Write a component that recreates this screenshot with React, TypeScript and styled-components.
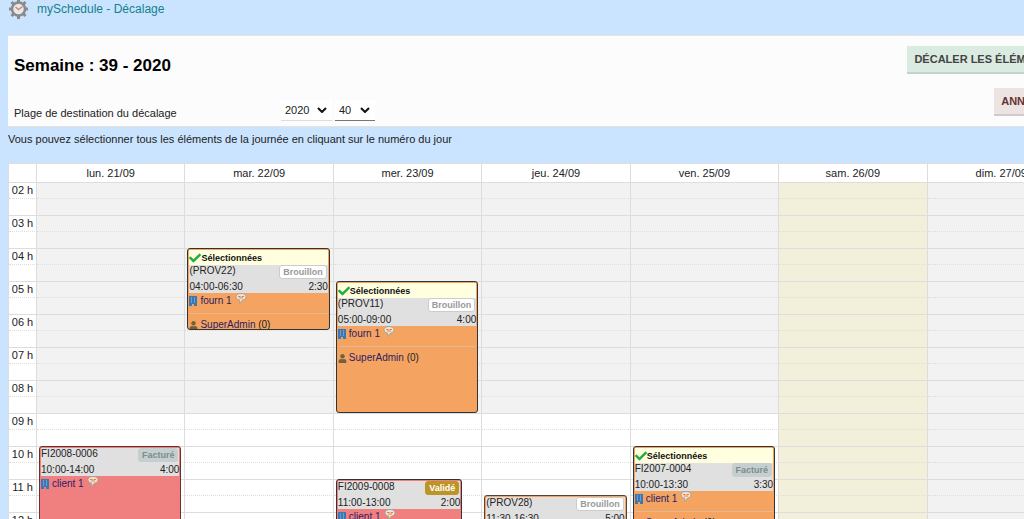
import React from "react";
import styled, { createGlobalStyle, css } from "styled-components";
import { FaCheck, FaUser } from "react-icons/fa";

const Global = createGlobalStyle`
  * { box-sizing: border-box; }
  body {
    margin: 0;
    background: #cae4ff;
    color: #222;
    font-family: "Liberation Sans", Arial, sans-serif;
    font-size: 11px;
  }
`;

const Page = styled.div`
  height: 100vh;
  overflow: hidden;
`;

const Content = styled.main`
  min-width: 1084px;
  padding: 0 8px;
`;

const TitleBar = styled.header`
  display: flex;
  align-items: center;
  gap: 8px;
  height: 18px;
  margin-bottom: 17px;
`;

const PageTitle = styled.h1`
  margin: 0;
  font-size: 12px;
  font-weight: normal;
  line-height: 16px;
  color: #14808f;
`;

const Panel = styled.section`
  display: flex;
  justify-content: space-between;
  height: 92px;
  padding: 0 14px 0 6px;
  background: #fcfcfc;
  border: solid #e6e2e0;
  border-width: 1px 0;
`;

const Settings = styled.div`
  display: flex;
  flex-direction: column;
  justify-content: space-between;
  padding: 20px 0 4px;
`;

const WeekTitle = styled.h2`
  margin: 0;
  font-size: 17px;
  line-height: 20px;
  color: #000;
`;

const RangeRow = styled.div`
  display: flex;
  align-items: flex-end;
  gap: 3px;
`;

const RangeLabel = styled.label`
  width: 264px;
  padding-bottom: 2px;
  line-height: 14px;
`;

const SelectBox = styled.span<{ $strong?: boolean }>`
  position: relative;
  display: flex;
  align-items: center;
  margin-bottom: 1px;
  background: #fff;
  border-bottom: 1px solid ${(p) => (p.$strong ? "#777" : "#ddd")};

  svg {
    position: absolute;
    right: 5px;
    pointer-events: none;
  }
`;

const Select = styled.select<{ $wide?: boolean }>`
  appearance: none;
  width: ${(p) => (p.$wide ? 51 : 40)}px;
  height: 20px;
  padding: 0 4px;
  border: 0;
  background: transparent;
  color: #222;
  font: inherit;
`;

const Actions = styled.div`
  display: flex;
  flex-direction: column;
  align-items: flex-end;
  gap: 14px;
  padding-top: 10px;
`;

const ActionButton = styled.button<{ $danger?: boolean }>`
  height: 28px;
  padding: 0 7px;
  border: 0;
  border-bottom: 2px solid ${(p) => (p.$danger ? "#d3c9c9" : "#c3d3ca")};
  background: ${(p) => (p.$danger ? "#ebe4e2" : "#daebe1")};
  color: ${(p) => (p.$danger ? "#633" : "#444")};
  font: bold 11px "Liberation Sans", Arial, sans-serif;
  text-transform: uppercase;
  white-space: nowrap;
`;

const Hint = styled.p`
  margin: 5px 0 17px;
  line-height: 14px;
`;

const Calendar = styled.table`
  width: 100%;
  table-layout: fixed;
  border-spacing: 0;
  border-left: 1px solid #ddd;
  background: #fff;
`;

const AxisCol = styled.col`
  width: 28px;
`;

const DayHeader = styled.th`
  height: 20px;
  padding: 0;
  border: solid #ddd;
  border-width: 1px 1px 1px 0;
  font-weight: normal;
  line-height: 16px;
`;

const slotLine = css<{ $half: boolean }>`
  height: ${(p) => (p.$half ? 17 : 16)}px;
  padding: 0;
  border-right: 1px solid #ddd;
  border-bottom: 1px ${(p) => (p.$half ? "solid" : "dotted")} #ddd;
`;

const HourCell = styled.th<{ $half: boolean }>`
  ${slotLine}
  font-weight: normal;
  line-height: 15px;
  white-space: nowrap;
`;

const Slot = styled.td<{ $half: boolean; $closed: boolean; $today: boolean }>`
  ${slotLine}
  position: relative;
  background: ${(p) => (p.$today ? "#f2efdb" : p.$closed ? "#f2f2f2" : "#fff")};
`;

const EventCard = styled.article<{ $tone: "orange" | "red"; $edge: string; $narrow?: boolean }>`
  position: absolute;
  z-index: 1;
  top: -1px;
  left: 2px;
  right: ${(p) => (p.$narrow ? 19 : 3)}px;
  overflow: hidden;
  border: 1px solid ${(p) => p.$edge};
  border-radius: 3px;
  background: ${(p) => (p.$tone === "orange" ? "#f4a460" : "#f08080")};
  padding: 1px;
  font-size: 10px;
  line-height: 14px;
`;

const SelectedBar = styled.div`
  display: flex;
  align-items: center;
  height: 15px;
  background: #ffffe0;
  color: #111;
  font-size: 9px;
  font-weight: bold;
`;

const EventHead = styled.div`
  height: 28px;
  background: #e0e0e0;
`;

const HeadLine = styled.div`
  display: flex;
  justify-content: space-between;
  height: 14px;
  line-height: 12px;

  & + & {
    line-height: 16px;
  }
`;

type Status = "Brouillon" | "Facturé" | "Validé";

const badgeColors: Record<Status, string> = {
  Brouillon: "background: #fff; border-color: #ccc; color: #999;",
  Facturé: "background: #c6cfd0; border-color: #c6cfd0; color: #7b8c8c;",
  Validé: "background: #bc9526; border-color: #bc9526; color: #fff;",
};

const Badge = styled.span<{ $status: Status }>`
  height: 14px;
  margin: 0 1px;
  padding: 0 3px;
  border: 1px solid;
  border-radius: 3px;
  font-size: 9px;
  font-weight: bold;
  line-height: 12px;
  ${(p) => badgeColors[p.$status]}
`;

const Party = styled.div`
  display: flex;
  align-items: center;
  gap: 3px;
  height: 20px;
  padding-bottom: 5px;

  svg:last-child {
    align-self: flex-start;
  }
`;

const Assignee = styled.div`
  display: flex;
  align-items: center;
  gap: 2px;
  padding-top: 4px;
  border-top: 1px solid #e3b78f;
`;

const Link = styled.a`
  color: #2b1c68;
  text-decoration: none;
`;

const GearClock = () => (
  <svg width="21" height="20" viewBox="0 0 21 20" aria-hidden="true">
    <g stroke="#8a8a8a" strokeWidth="3">
      <path d="M10.500 0v4M10.500 16v4M1 10h4M16 10h4M3.500 3l3 3M14.500 14l3 3M17.500 3l-3 3M6.500 14l-3 3" />
    </g>
    <circle cx="10.500" cy="10" r="6.500" fill="#e0eaf4" stroke="#8a8a8a" strokeWidth="2.500" />
    <path d="M7.500 8l3 2.500 4-3" fill="none" stroke="#f08050" strokeWidth="1.500" />
  </svg>
);

const Chevron = () => (
  <svg width="10" height="6" viewBox="0 0 10 6" aria-hidden="true">
    <path d="M1 1l4 4 4-4" fill="none" stroke="#111" strokeWidth="2" />
  </svg>
);

const BuildingIcon = () => (
  <svg width="8" height="10" viewBox="0 0 8 10" aria-hidden="true">
    <path d="M0 0h8v10H5V8H3v2H0z" fill="#3a78b5" />
    <path d="M2 1.500h1v1H2zM5 1.500h1v1H5zM2 3.500h1v1H2zM5 3.500h1v1H5zM2 5.500h1v1H2zM5 5.500h1v1H5z" fill="#a9bfd0" />
  </svg>
);

const NoteIcon = () => (
  <svg width="12" height="12" viewBox="0 0 12 12" aria-hidden="true">
    <path d="M6 .5c3 0 5 1.300 5 3.300S9.500 6.900 7.500 7L5 10.500 4.500 7C2.500 6.900 1 5.800 1 3.800S3 .5 6 .5z" fill="#ece5dc" stroke="#a9a299" />
    <path d="M3 3.500h2.500M6.500 3.500H9M4 5h4" stroke="#f08030" />
  </svg>
);

interface Booking {
  day: number;
  start: number;
  end: number;
  reference: string;
  hours: string;
  duration: string;
  status: Status;
  party: string;
  tone: "orange" | "red";
  edge: string;
  selected?: boolean;
  narrow?: boolean;
}

const bookings: Booking[] = [
  { day: 1, start: 4, end: 6.5, reference: "(PROV22)", hours: "04:00-06:30", duration: "2:30", status: "Brouillon", party: "fourn 1", tone: "orange", edge: "#333", selected: true },
  { day: 2, start: 5, end: 9, reference: "(PROV11)", hours: "05:00-09:00", duration: "4:00", status: "Brouillon", party: "fourn 1", tone: "orange", edge: "#333", selected: true },
  { day: 0, start: 10, end: 14, reference: "FI2008-0006", hours: "10:00-14:00", duration: "4:00", status: "Facturé", party: "client 1", tone: "red", edge: "#633" },
  { day: 2, start: 11, end: 13, reference: "FI2009-0008", hours: "11:00-13:00", duration: "2:00", status: "Validé", party: "client 1", tone: "red", edge: "#333", narrow: true },
  { day: 3, start: 11.5, end: 16.5, reference: "(PROV28)", hours: "11:30-16:30", duration: "5:00", status: "Brouillon", party: "fourn 1", tone: "orange", edge: "#543" },
  { day: 4, start: 10, end: 13.5, reference: "FI2007-0004", hours: "10:00-13:30", duration: "3:30", status: "Facturé", party: "client 1", tone: "orange", edge: "#333", selected: true },
];

const days = ["lun. 21/09", "mar. 22/09", "mer. 23/09", "jeu. 24/09", "ven. 25/09", "sam. 26/09", "dim. 27/09"];
const HOUR_HEIGHT = 33;
const slots = Array.from({ length: 32 }, (_, i) => 2 + i / 2);

const BookingCard = ({ booking: b }: { booking: Booking }) => (
  <EventCard $tone={b.tone} $edge={b.edge} $narrow={b.narrow} style={{ height: Math.floor((b.end - b.start) * HOUR_HEIGHT) }}>
    {b.selected && (
      <SelectedBar>
        <FaCheck size={12} color="#1fae3c" />
        Sélectionnées
      </SelectedBar>
    )}
    <EventHead>
      <HeadLine>
        {b.reference}
        <Badge $status={b.status}>{b.status}</Badge>
      </HeadLine>
      <HeadLine>
        <span>{b.hours}</span>
        <span>{b.duration}</span>
      </HeadLine>
    </EventHead>
    <Party>
      <BuildingIcon />
      <Link href="#party">{b.party}</Link>
      <NoteIcon />
    </Party>
    {b.tone === "orange" && (
      <Assignee>
        <FaUser size={9} color="#75603c" />
        <span>
          <Link href="#user">SuperAdmin</Link> (0)
        </span>
      </Assignee>
    )}
  </EventCard>
);

export default function App() {
  return (
    <Page>
      <Global />
      <Content>
        <TitleBar>
          <GearClock />
          <PageTitle>mySchedule - Décalage</PageTitle>
        </TitleBar>
        <Panel>
          <Settings>
            <WeekTitle>Semaine : 39 - 2020</WeekTitle>
            <RangeRow>
              <RangeLabel htmlFor="year">Plage de destination du décalage</RangeLabel>
              <SelectBox>
                <Select id="year" $wide defaultValue="2020">
                  <option>2020</option>
                  <option>2021</option>
                </Select>
                <Chevron />
              </SelectBox>
              <SelectBox $strong>
                <Select aria-label="Semaine" defaultValue="40">
                  <option>40</option>
                  <option>41</option>
                </Select>
                <Chevron />
              </SelectBox>
            </RangeRow>
          </Settings>
          <Actions>
            <ActionButton type="button">Décaler les éléments</ActionButton>
            <ActionButton type="button" $danger>Annuler</ActionButton>
          </Actions>
        </Panel>
        <Hint>Vous pouvez sélectionner tous les éléments de la journée en cliquant sur le numéro du jour</Hint>
        <Calendar>
          <colgroup>
            <AxisCol />
            {days.map((d) => (
              <col key={d} />
            ))}
          </colgroup>
          <thead>
            <tr>
              <DayHeader />
              {days.map((d) => (
                <DayHeader key={d} scope="col">{d}</DayHeader>
              ))}
            </tr>
          </thead>
          <tbody>
            {slots.map((time) => {
              const half = time % 1 !== 0;
              return (
                <tr key={time}>
                  <HourCell $half={half} scope="row">
                    {half ? "" : `${String(time).padStart(2, "0")} h`}
                  </HourCell>
                  {days.map((d, day) => (
                    <Slot key={d} $half={half} $closed={time < 9 || day > 5} $today={day === 5}>
                      {bookings
                        .filter((b) => b.day === day && b.start === time)
                        .map((b) => (
                          <BookingCard key={b.reference} booking={b} />
                        ))}
                    </Slot>
                  ))}
                </tr>
              );
            })}
          </tbody>
        </Calendar>
      </Content>
    </Page>
  );
}
